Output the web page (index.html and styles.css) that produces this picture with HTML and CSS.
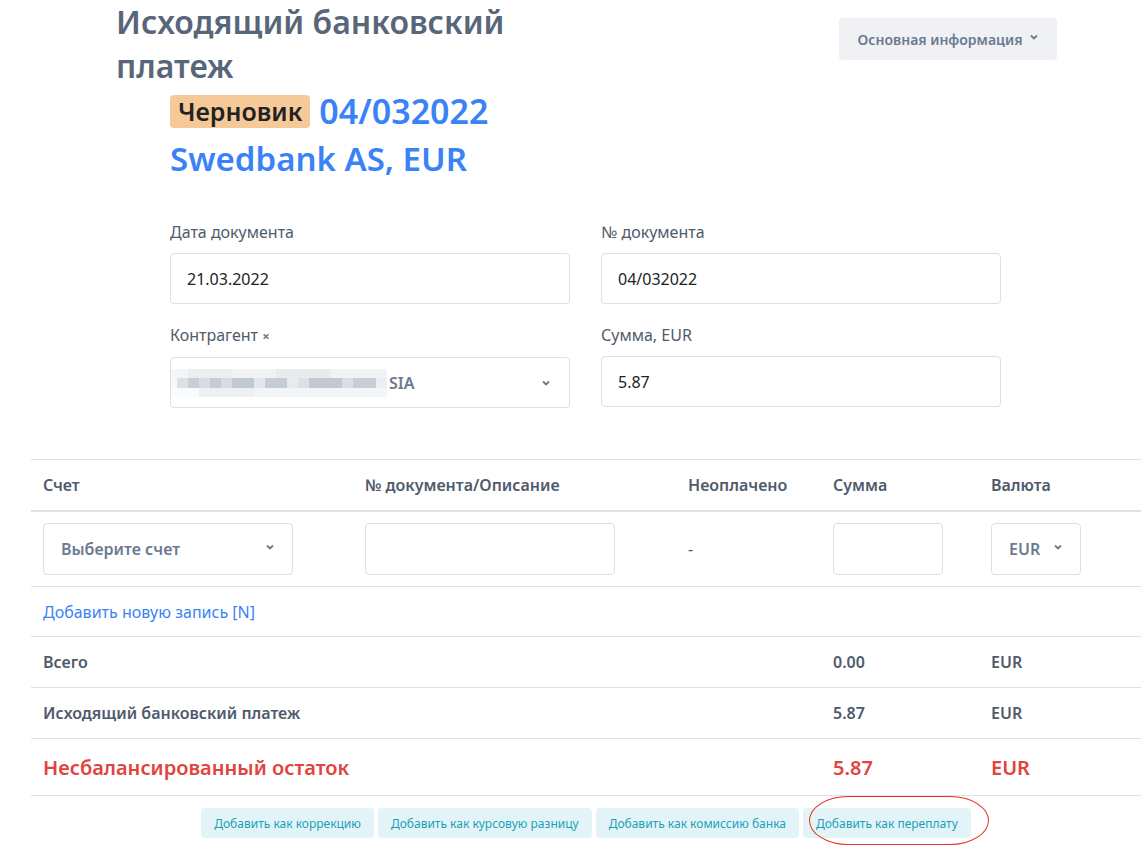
FILE: index.html
```html
<!DOCTYPE html>
<html lang="ru">
<head>
<meta charset="utf-8">
<title>Исходящий банковский платеж</title>
<link rel="stylesheet" href="styles.css">
</head>
<body>
<div class="page">
  <header class="top">
    <h1 class="title">Исходящий банковский платеж</h1>
    <button class="info-btn">Основная информация
      <svg class="chev" width="8" height="6" viewBox="0 0 8 6"><polyline points="1,1.5 4,4.5 7,1.5" fill="none" stroke="currentColor" stroke-width="1.8"/></svg>
    </button>
  </header>

  <div class="doc-head">
    <div class="doc-line"><span class="badge">Черновик</span><span class="doc-num">04/032022</span></div>
    <div class="doc-line">Swedbank AS, EUR</div>
  </div>

  <form class="form">
    <div class="field">
      <label class="label">Дата документа</label>
      <div class="input">21.03.2022</div>
    </div>
    <div class="field">
      <label class="label">№ документа</label>
      <div class="input">04/032022</div>
    </div>
    <div class="field">
      <label class="label">Контрагент <span class="x">×</span></label>
      <div class="input select-input">
        <span class="blur"></span><span class="sia">SIA</span>
        <svg class="chev sel-chev" width="8" height="6" viewBox="0 0 8 6"><polyline points="1,1.5 4,4.5 7,1.5" fill="none" stroke="currentColor" stroke-width="1.8"/></svg>
      </div>
    </div>
    <div class="field">
      <label class="label">Сумма, EUR</label>
      <div class="input">5.87</div>
    </div>
  </form>

  <div class="table-wrap">
    <table class="tbl">
      <colgroup>
        <col class="c1"><col class="c2"><col class="c3"><col class="c4"><col class="c5">
      </colgroup>
      <thead>
        <tr><th>Счет</th><th>№ документа/Описание</th><th>Неоплачено</th><th>Сумма</th><th>Валюта</th></tr>
      </thead>
      <tbody>
        <tr class="entry">
          <td><div class="ctl ctl-acc"><span>Выберите счет</span><svg class="chev" width="8" height="6" viewBox="0 0 8 6"><polyline points="1,1.5 4,4.5 7,1.5" fill="none" stroke="currentColor" stroke-width="1.8"/></svg></div></td>
          <td><div class="ctl ctl-desc"></div></td>
          <td class="dash">-</td>
          <td><div class="ctl ctl-sum"></div></td>
          <td><div class="ctl ctl-cur"><span>EUR</span><svg class="chev" width="8" height="6" viewBox="0 0 8 6"><polyline points="1,1.5 4,4.5 7,1.5" fill="none" stroke="currentColor" stroke-width="1.8"/></svg></div></td>
        </tr>
        <tr class="add-row"><td colspan="5"><a class="add-link">Добавить новую запись [N]</a></td></tr>
        <tr class="sum-row"><td colspan="3">Всего</td><td>0.00</td><td>EUR</td></tr>
        <tr class="sum-row"><td colspan="3">Исходящий банковский платеж</td><td>5.87</td><td>EUR</td></tr>
        <tr class="sum-row red"><td colspan="3">Несбалансированный остаток</td><td>5.87</td><td>EUR</td></tr>
      </tbody>
    </table>
    <div class="actions">
      <button class="act">Добавить как коррекцию</button>
      <button class="act">Добавить как курсовую разницу</button>
      <button class="act">Добавить как комиссию банка</button>
      <button class="act marked">Добавить как переплату<span class="ring"></span></button>
    </div>
  </div>
</div>
</body>
</html>
```

FILE: styles.css
```css
* { box-sizing: border-box; }
html, body { margin: 0; padding: 0; background: #fff; }
body { font-family: "Noto Sans", "Open Sans", sans-serif; color: #222; width: 1148px; height: 868px; overflow: hidden; }

.top { display: flex; justify-content: space-between; align-items: flex-start; padding: 0 91px 0 116px; }
.title { margin: 0; font-size: 32px; line-height: 44px; font-weight: 600; color: #58667a; width: 430px; }
.info-btn { margin-top: 18px; height: 42px; width: 218px; border: 0; border-radius: 4px; background: #eff1f4; color: #6b7a8f; font-family: inherit; font-size: 14px; font-weight: 600; display: flex; align-items: center; justify-content: center; gap: 8px; padding: 0; }
.info-btn .chev { margin-top: -4px; }

.doc-head { padding-left: 170px; margin-top: 0; color: #3b82f6; font-size: 33px; font-weight: 600; }
.doc-line { line-height: 47px; display: flex; align-items: center; }
.doc-num { font-size: 34px; }
.badge { display: inline-block; background: #f5ca98; color: #222; font-size: 25px; font-weight: 600; line-height: 33px; padding: 0 8px; border-radius: 4px; margin-right: 9px; }

.form { display: grid; grid-template-columns: 400px 400px; column-gap: 31px; row-gap: 20px; padding-left: 170px; margin-top: 39px; }
.field { display: flex; flex-direction: column; }
.label { font-size: 16px; line-height: 22px; color: #4f5b6b; margin-bottom: 10px; }
.label .x { font-size: 13px; font-weight: 700; color: #6b7a8f; }
.input { height: 51px; border: 1px solid #dcdfe3; border-radius: 4px; display: flex; align-items: center; padding: 0 16px; font-size: 16px; color: #222; }
.select-input { padding-left: 0; position: relative; }
.blur { width: 216px; height: 28px; display: inline-block;
  background:
    linear-gradient(90deg, #f7f8f9 0 6px, #dde1e6 6px 17px, #c9ced6 17px 28px, #d9dde3 28px 39px, #c6cbd3 39px 50px, #d8dce2 50px 61px, #c3c9d1 61px 83px, #e3e6ea 83px 94px, #c6ccd4 94px 116px, #e8ebee 116px 127px, #dde1e6 127px 138px, #c3c8d1 138px 171px, #dadee3 171px 182px, #c9ced6 182px 205px, #eceef1 205px 216px) 0 9px / 100% 10px no-repeat,
    linear-gradient(90deg, #f4f5f7 0 17px, #eceef1 17px 61px, #f0f2f4 61px 105px, #e9ecef 105px 160px, #f2f3f5 160px 216px) 0 0 / 100% 9px no-repeat,
    linear-gradient(90deg, #fafbfc 0 28px, #eef0f2 28px 83px, #f4f5f7 83px 216px) 0 19px / 100% 9px no-repeat; }
.sia { font-weight: 600; color: #6b7a8f; margin-left: 2px; }
.sel-chev { position: absolute; right: 19px; top: 22px; color: #6b7a8f; }

.table-wrap { margin: 51px 0 0 31px; width: 1110px; }
.tbl { width: 100%; border-collapse: collapse; table-layout: fixed; }
.c1 { width: 322px; } .c2 { width: 323px; } .c3 { width: 145px; } .c4 { width: 158px; }
.tbl th { text-align: left; font-size: 16px; font-weight: 600; color: #4f5b6b; padding: 0 12px; height: 51px; border-top: 1px solid #dee2e6; border-bottom: 2px solid #dee2e6; }
.tbl td { padding: 0 12px; border-bottom: 1px solid #dee2e6; font-size: 16px; }
.entry td { height: 76px; }
.ctl { height: 52px; border: 1px solid #dcdfe3; border-radius: 4px; display: flex; align-items: center; justify-content: space-between; padding: 0 17px; color: #6b7a8f; font-weight: 600; font-size: 16px; }
.ctl .chev { margin-top: -3px; }
.ctl-acc { width: 250px; padding-right: 18px; }
.ctl-desc { width: 250px; }
.ctl-sum { width: 110px; }
.ctl-cur { width: 90px; padding-right: 18px; }
.dash { color: #555; }
.add-row td { height: 50px; }
.add-link { color: #3b82f6; font-size: 16px; }
.sum-row td { height: 51px; font-weight: 600; color: #4f5b6b; }
.sum-row.red td { height: 57px; color: #e0443c; font-size: 20px; font-weight: 600; }

.actions { display: flex; justify-content: center; gap: 4px; margin-top: 12px; }
.act { position: relative; height: 30px; border: 0; border-radius: 4px; background: #e3f4f8; color: #1aa1b8; font-family: inherit; font-size: 12px; padding: 0 13px; }
.ring { position: absolute; left: 6px; top: -12px; width: 180px; height: 49px; border: 1.5px solid #e8321e; border-radius: 40px / 25px; pointer-events: none; }
```
